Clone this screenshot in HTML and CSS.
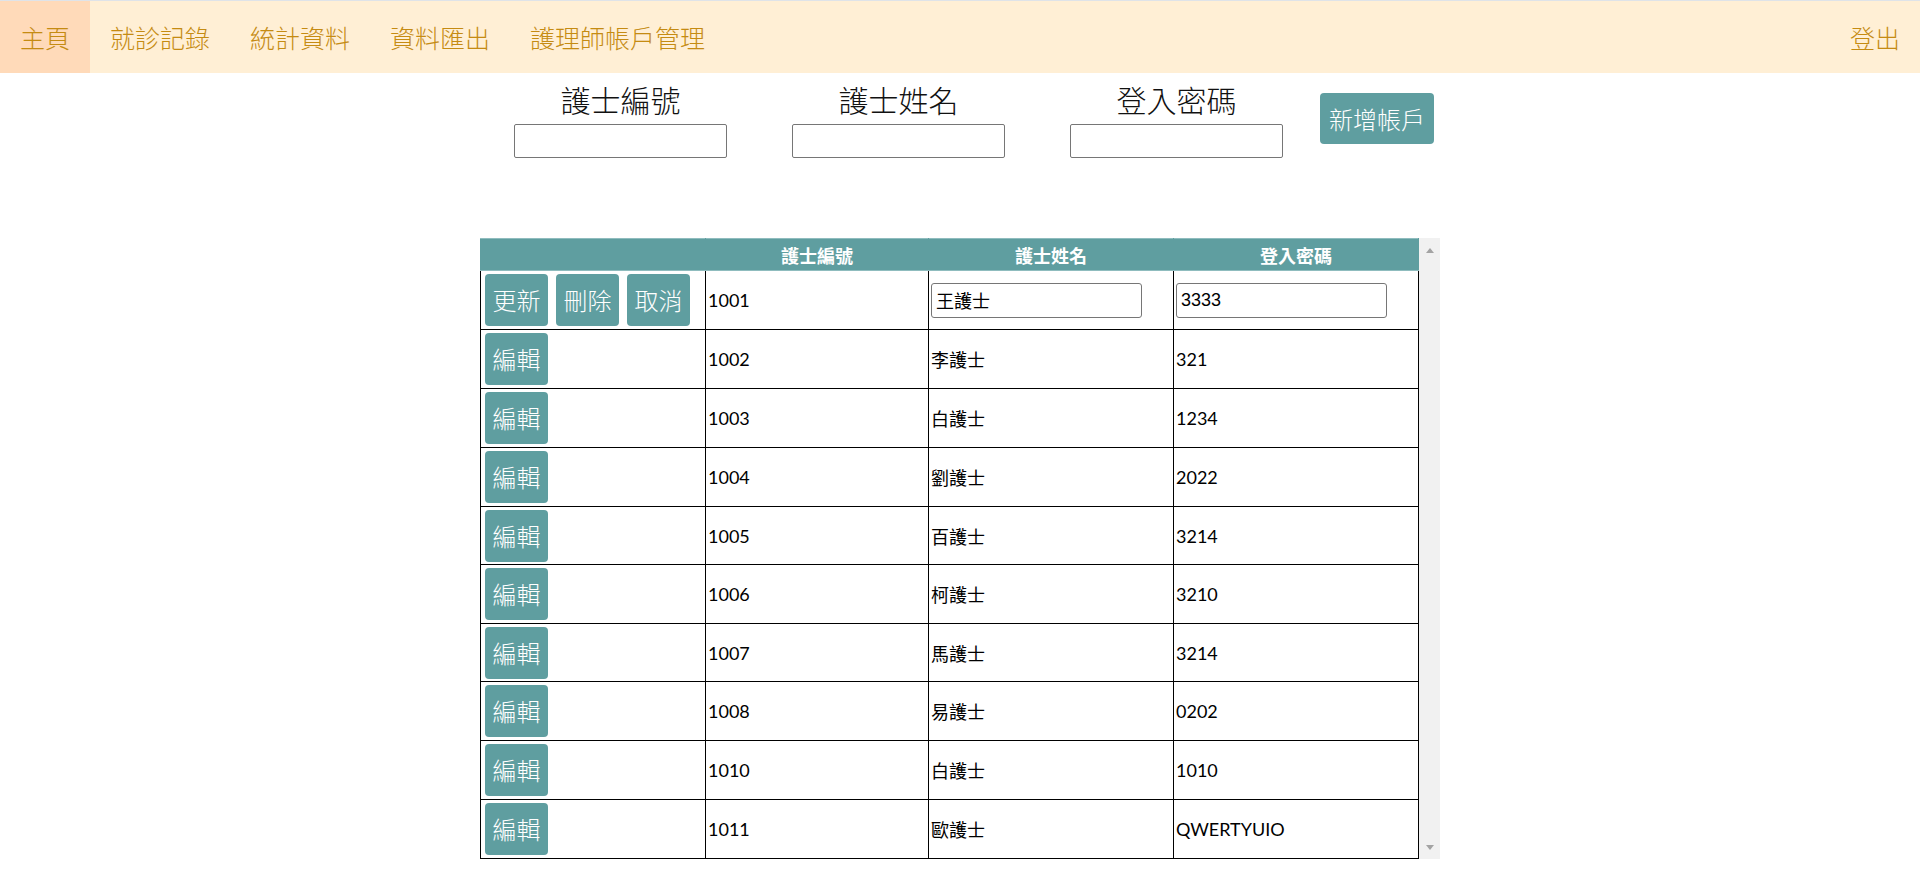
FILE: index.html
```html
<!DOCTYPE html>
<html lang="zh-Hant">
<head>
<meta charset="utf-8">
<title>護理師帳戶管理</title>
<link rel="stylesheet" href="styles.css">
</head>
<body>
<nav class="topnav">
  <ul class="nav-list">
    <li class="nav-item active">主頁</li>
    <li class="nav-item">就診記錄</li>
    <li class="nav-item">統計資料</li>
    <li class="nav-item">資料匯出</li>
    <li class="nav-item">護理師帳戶管理</li>
  </ul>
  <div class="nav-item">登出</div>
</nav>

<main class="page">
  <form class="add-form">
    <div class="fields">
      <div class="field">
        <label class="field-label">護士編號</label>
        <input class="field-input" type="text">
      </div>
      <div class="field">
        <label class="field-label">護士姓名</label>
        <input class="field-input" type="text">
      </div>
      <div class="field">
        <label class="field-label">登入密碼</label>
        <input class="field-input" type="text">
      </div>
    </div>
    <button class="btn btn-add" type="button">新增帳戶</button>
  </form>

  <div class="table-frame">
    <div class="table-wrap">
      <table class="nurse-table">
        <colgroup>
          <col class="c-act"><col class="c-id"><col class="c-name"><col class="c-pw">
        </colgroup>
        <thead>
          <tr><th></th><th>護士編號</th><th>護士姓名</th><th>登入密碼</th></tr>
        </thead>
        <tbody>
          <tr>
            <td class="act"><div class="actions"><button class="btn" type="button">更新</button><button class="btn" type="button">刪除</button><button class="btn" type="button">取消</button></div></td>
            <td>1001</td>
            <td><input class="cell-input" type="text" value="王護士"></td>
            <td><input class="cell-input" type="text" value="3333"></td>
          </tr>
          <tr><td class="act"><button class="btn" type="button">編輯</button></td><td>1002</td><td>李護士</td><td>321</td></tr>
          <tr><td class="act"><button class="btn" type="button">編輯</button></td><td>1003</td><td>白護士</td><td>1234</td></tr>
          <tr><td class="act"><button class="btn" type="button">編輯</button></td><td>1004</td><td>劉護士</td><td>2022</td></tr>
          <tr><td class="act"><button class="btn" type="button">編輯</button></td><td>1005</td><td>百護士</td><td>3214</td></tr>
          <tr><td class="act"><button class="btn" type="button">編輯</button></td><td>1006</td><td>柯護士</td><td>3210</td></tr>
          <tr><td class="act"><button class="btn" type="button">編輯</button></td><td>1007</td><td>馬護士</td><td>3214</td></tr>
          <tr><td class="act"><button class="btn" type="button">編輯</button></td><td>1008</td><td>易護士</td><td>0202</td></tr>
          <tr><td class="act"><button class="btn" type="button">編輯</button></td><td>1010</td><td>白護士</td><td>1010</td></tr>
          <tr><td class="act"><button class="btn" type="button">編輯</button></td><td>1011</td><td>歐護士</td><td>QWERTYUIO</td></tr>
        </tbody>
      </table>
    </div>
    <div class="scrollbar" aria-hidden="true">
      <span class="arrow arrow-up"></span>
      <span class="arrow arrow-down"></span>
    </div>
  </div>
</main>
</body>
</html>
```

FILE: styles.css
```css
* { box-sizing: border-box; }

body {
  margin: 0;
  font-family: Lato, "Noto Sans CJK TC", sans-serif;
  color: #000;
  background: #fff;
}

/* ---------- top navigation ---------- */
.topnav {
  display: flex;
  justify-content: space-between;
  background: #ffefd5;
  border-top: 1px solid #dfe3e8;
  height: 73px;
}
.nav-list {
  display: flex;
  margin: 0;
  padding: 0;
  list-style: none;
}
.nav-item {
  padding: 0 20px;
  line-height: 72px;
  font-size: 25px;
  font-weight: 300;
  font-family: "Noto Sans CJK TC", sans-serif;
  color: #c58b12;
}
.nav-item.active {
  background: #ffdab9;
}

/* ---------- add form ---------- */
.add-form {
  display: flex;
  justify-content: center;
  align-items: center;
  gap: 37px;
  padding: 6px 0 0 28px;
  margin: 0;
}
.fields {
  display: flex;
  gap: 65px;
}
.field {
  display: flex;
  flex-direction: column;
  align-items: center;
  width: 213px;
}
.field-label {
  font-family: "Noto Sans CJK TC", sans-serif;
  font-size: 30px;
  font-weight: 300;
  line-height: 40px;
  color: #111;
  margin-bottom: 5px;
}
.field-input {
  width: 213px;
  height: 34px;
  border: 1px solid #767676;
  border-radius: 2px;
  font-size: 18px;
  font-family: "Liberation Sans", "Noto Sans CJK TC", sans-serif;
  padding: 1px 3px;
}

/* ---------- buttons ---------- */
.btn {
  background: #5f9ea0;
  color: #fff;
  border: none;
  border-radius: 4px;
  font-family: "Noto Sans CJK TC", sans-serif;
  font-size: 24px;
  font-weight: 300;
  line-height: 32px;
  padding: 10px 7px;
  width: 63px;
  cursor: pointer;
}
.btn-add {
  width: 114px;
  padding: 9px 9px;
  line-height: 33px;
}

/* ---------- table + scrollbar ---------- */
.table-frame {
  display: flex;
  width: 960px;
  margin: 80px auto 0;
}
.table-wrap {
  flex: 1;
  min-width: 0;
  overflow: hidden;
}
.scrollbar {
  width: 21px;
  flex: none;
  background: #f1f1f1;
  display: flex;
  flex-direction: column;
  justify-content: space-between;
  align-items: center;
  padding: 10px 0 9px;
}
.arrow {
  width: 0;
  height: 0;
  border-left: 4.5px solid transparent;
  border-right: 4.5px solid transparent;
}
.arrow-up {
  border-bottom: 5px solid #a3a3a3;
}
.arrow-down {
  border-top: 5px solid #a3a3a3;
}

.nurse-table {
  width: 100%;
  border-collapse: collapse;
  table-layout: fixed;
  font-size: 18px;
}
.c-act { width: 225px; }
.c-id { width: 223px; }
.c-name { width: 245px; }

.nurse-table th {
  background: #5f9ea0;
  color: #fff;
  font-family: "Noto Sans CJK TC", sans-serif;
  font-weight: 700;
  font-size: 18px;
  height: 32px;
  padding: 0;
  border: 1px solid #5f9ea0;
  border-top-color: #8fbcbe;
  border-bottom-color: #8fbcbe;
  text-align: center;
}
.nurse-table td {
  border: 1px solid #000;
  height: 59px;
  padding: 0 2px;
  vertical-align: middle;
  font-family: Lato, "Noto Sans CJK TC", sans-serif;
}
.nurse-table tbody tr:nth-child(5) td,
.nurse-table tbody tr:nth-child(7) td {
  height: 58px;
}
.nurse-table td.act {
  padding-left: 4px;
}
.actions {
  display: flex;
  gap: 8px;
}
.cell-input {
  width: 211px;
  height: 35px;
  border: 1px solid #767676;
  border-radius: 3px;
  font-size: 18px;
  font-family: "Liberation Sans", "Noto Sans CJK TC", sans-serif;
  padding: 1px 4px;
}
```
